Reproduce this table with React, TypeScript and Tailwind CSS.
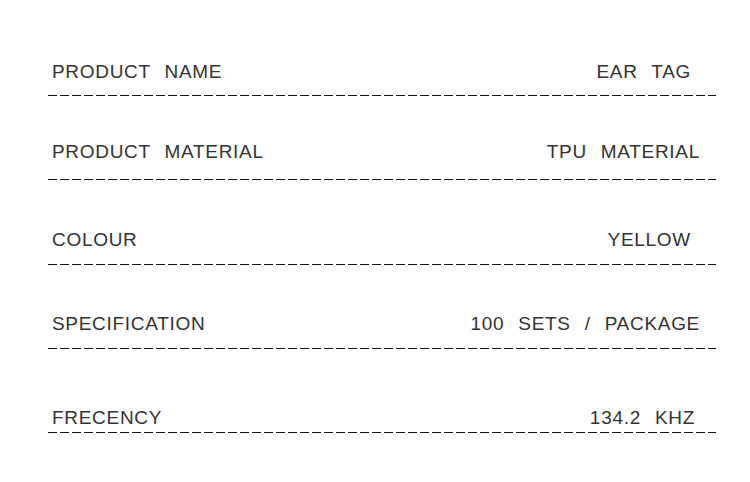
import React from "react";

type Spec = {
    label: string;
    value: string;
    top: string;
    gap: string;
    pr: string;
};

const specs: Spec[] = [
    { label: "PRODUCT NAME", value: "EAR TAG", top: "mt-[61px]", gap: "mt-[12px]", pr: "pr-[25px]" },
    { label: "PRODUCT MATERIAL", value: "TPU MATERIAL", top: "mt-[45px]", gap: "mt-[16px]", pr: "pr-[16px]" },
    { label: "COLOUR", value: "YELLOW", top: "mt-[49px]", gap: "mt-[13px]", pr: "pr-[25px]" },
    { label: "SPECIFICATION", value: "100 SETS / PACKAGE", top: "mt-[48px]", gap: "mt-[13px]", pr: "pr-[16px]" },
    { label: "FRECENCY", value: "134.2 KHZ", top: "mt-[58px]", gap: "mt-[3px]", pr: "pr-[21px]" },
];

const SpecRow = ({ spec }: { spec: Spec }) => {
    return (
        <div className={spec.top}>
            <div className={`flex justify-between items-center pl-[4px] ${spec.pr} h-[22px] leading-[22px]`}>
                <span>{spec.label}</span>
                <span>{spec.value}</span>
            </div>
            <div
                className={`${spec.gap} h-px w-full bg-[repeating-linear-gradient(to_right,#111_0_9px,transparent_9px_12px)]`}
            ></div>
        </div>
    );
};

export default function App() {
    return (
        <div className="w-[750px] h-[482px] bg-white overflow-hidden">
            <div
                className="w-[668px] ml-[48px] flex flex-col text-[19px] text-[#333] tracking-[0.7px] [word-spacing:8px]"
                style={{ fontFamily: '"Liberation Sans", Arial, sans-serif' }}
            >
                {specs.map((s) => (
                    <SpecRow key={s.label} spec={s} />
                ))}
            </div>
        </div>
    );
}
